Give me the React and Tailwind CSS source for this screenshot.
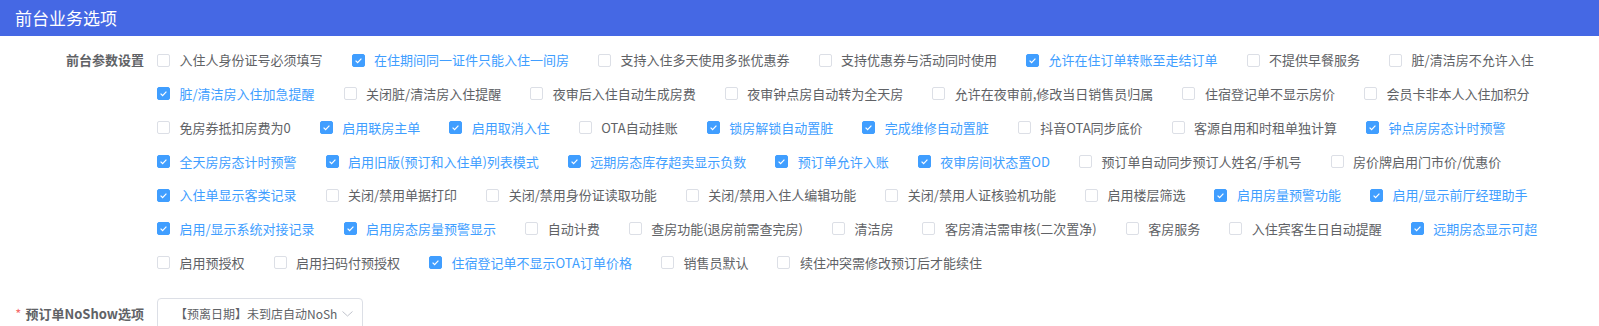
import React from 'react';

const rows = [
  [
    ['入住人身份证号必须填写', 0],
    ['在住期间同一证件只能入住一间房', 1],
    ['支持入住多天使用多张优惠券', 0],
    ['支持优惠券与活动同时使用', 0],
    ['允许在住订单转账至走结订单', 1],
    ['不提供早餐服务', 0],
    ['脏/清洁房不允许入住', 0],
  ],
  [
    ['脏/清洁房入住加急提醒', 1],
    ['关闭脏/清洁房入住提醒', 0],
    ['夜审后入住自动生成房费', 0],
    ['夜审钟点房自动转为全天房', 0],
    ['允许在夜审前,修改当日销售员归属', 0],
    ['住宿登记单不显示房价', 0],
    ['会员卡非本人入住加积分', 0],
  ],
  [
    ['免房券抵扣房费为0', 0],
    ['启用联房主单', 1],
    ['启用取消入住', 1],
    ['OTA自动挂账', 0],
    ['锁房解锁自动置脏', 1],
    ['完成维修自动置脏', 1],
    ['抖音OTA同步底价', 0],
    ['客源自用和时租单独计算', 0],
    ['钟点房房态计时预警', 1],
  ],
  [
    ['全天房房态计时预警', 1],
    ['启用旧版(预订和入住单)列表模式', 1],
    ['远期房态库存超卖显示负数', 1],
    ['预订单允许入账', 1],
    ['夜审房间状态置OD', 1],
    ['预订单自动同步预订人姓名/手机号', 0],
    ['房价牌启用门市价/优惠价', 0],
  ],
  [
    ['入住单显示客类记录', 1],
    ['关闭/禁用单据打印', 0],
    ['关闭/禁用身份证读取功能', 0],
    ['关闭/禁用入住人编辑功能', 0],
    ['关闭/禁用人证核验机功能', 0],
    ['启用楼层筛选', 0],
    ['启用房量预警功能', 1],
    ['启用/显示前厅经理助手', 1],
  ],
  [
    ['启用/显示系统对接记录', 1],
    ['启用房态房量预警显示', 1],
    ['自动计费', 0],
    ['查房功能(退房前需查完房)', 0],
    ['清洁房', 0],
    ['客房清洁需审核(二次置净)', 0],
    ['客房服务', 0],
    ['入住宾客生日自动提醒', 0],
    ['远期房态显示可超', 1],
  ],
  [
    ['启用预授权', 0],
    ['启用扫码付预授权', 0],
    ['住宿登记单不显示OTA订单价格', 1],
    ['销售员默认', 0],
    ['续住冲突需修改预订后才能续住', 0],
  ],
];

const options = rows.flat();

function Checkbox({ label, checked }) {
  return (
    <label className="flex items-center h-[20px] mr-[29px] whitespace-nowrap text-[13px] cursor-pointer">
      {checked ? (
        <span className="w-[13px] h-[13px] rounded-[2px] bg-[#409eff] border border-[#409eff] flex items-center justify-center shrink-0">
          <svg width="11" height="11" viewBox="0 0 11 11" fill="none">
            <path d="M2.6 5.6 L4.6 7.6 L8.4 3.6" stroke="#fff" strokeWidth="1.2" />
          </svg>
        </span>
      ) : (
        <span className="w-[13px] h-[13px] rounded-[2px] bg-white border border-[#dcdfe6] shrink-0" />
      )}
      <span className={`ml-[9.5px] ${checked ? 'text-[#409eff]' : 'text-[#606266]'}`}>{label}</span>
    </label>
  );
}

export default function App() {
  return (
    <div className="min-h-screen bg-white font-['Noto_Sans_CJK_SC','Noto_Sans',sans-serif]">
      <div className="h-[36px] bg-[#4568e4] flex items-center pl-[15px] text-white text-[17px]">
        前台业务选项
      </div>

      <div className="pt-[14px]">
        <div className="flex">
          <div className="w-[144px] shrink-0 h-[20px] leading-[20px] text-right text-[13px] font-bold text-[#606266]">
            前台参数设置
          </div>
          <div className="ml-[13px] flex-1 pr-[20px] flex flex-wrap gap-y-[13.8px]">
            {options.map(([label, checked]) => (
              <Checkbox key={label} label={label} checked={!!checked} />
            ))}
          </div>
        </div>

        <div className="flex items-center mt-[25px]">
          <div className="w-[144px] shrink-0 text-right text-[13px] font-bold text-[#606266]">
            <span className="text-[#f56c6c] mr-[4px] font-normal">*</span>
            预订单NoShow选项
          </div>
          <div className="ml-[13px] w-[206px] h-[32px] border border-[#dcdfe6] rounded-[4px] flex items-center pl-[17px]">
            <span className="whitespace-nowrap text-[12px] text-[#606266]">
              【预离日期】未到店自动NoSh
            </span>
            <svg className="ml-auto mr-[9px]" width="11" height="6" viewBox="0 0 11 6" fill="none">
              <path d="M0.5 0.5 L5.5 5 L10.5 0.5" stroke="#c0c4cc" strokeWidth="1" />
            </svg>
          </div>
        </div>
      </div>
    </div>
  );
}
